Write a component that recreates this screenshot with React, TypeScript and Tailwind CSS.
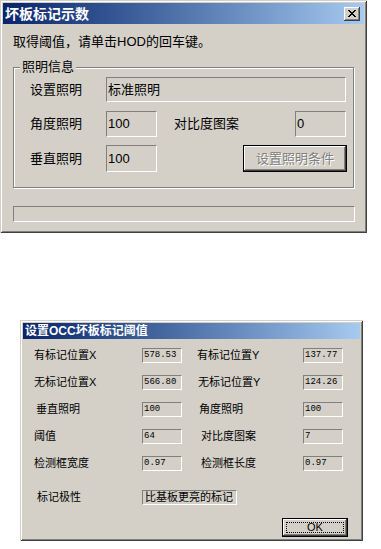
import React from "react";

const win =
  "bg-[#d4d0c8] shadow-[inset_1px_1px_#d4d0c8,inset_-1px_-1px_#404040,inset_2px_2px_#ffffff,inset_-2px_-2px_#808080]";
const sunken = "border border-t-[#808080] border-l-[#808080] border-b-white border-r-white";
const raised =
  "bg-[#d4d0c8] shadow-[inset_-1px_-1px_#404040,inset_1px_1px_#ffffff,inset_-2px_-2px_#808080]";

function CloseBtn() {
  return (
    <div className={`w-[16px] h-[14px] flex items-center justify-center ${raised}`}>
      <svg width="8" height="7" viewBox="0 0 8 7" shapeRendering="crispEdges">
        <path d="M0 0h2v1h-2zM6 0h2v1h-2zM1 1h2v1h-2zM5 1h2v1h-2zM2 2h4v1h-4zM3 3h2v1h-2zM2 4h4v1h-4zM1 5h2v1h-2zM5 5h2v1h-2zM0 6h2v1h-2zM6 6h2v1h-2z" fill="#000" />
      </svg>
    </div>
  );
}

function Row({
  l1,
  v1,
  l2,
  v2,
  o1 = 0,
  o2 = 0,
}: {
  l1: string;
  v1: string;
  l2: string;
  v2: string;
  o1?: number;
  o2?: number;
}) {
  return (
    <div className="flex items-center h-[15px]">
      <div className={`w-[119px] text-[11px] leading-[15px] whitespace-nowrap ${o1 === 2 ? "pl-[13px]" : o1 === 3 ? "pl-[14px]" : "pl-[11px]"}`}>{l1}</div>
      <div className={`w-[40px] h-[15px] ${sunken} flex items-center pl-[1px] font-['Liberation_Mono',monospace] text-[9px] leading-none`}>{v1}</div>
      <div
        className={`w-[121px] text-[11px] leading-[15px] whitespace-nowrap ${o2 === 1 ? "pl-[16px]" : o2 === 2 ? "pl-[17px]" : o2 === 4 ? "pl-[19px]" : "pl-[15px]"}`}
      >
        {l2}
      </div>
      <div className={`w-[40px] h-[15px] ${sunken} flex items-center pl-[1px] font-['Liberation_Mono',monospace] text-[9px] leading-none`}>{v2}</div>
    </div>
  );
}

export default function App() {
  return (
    <div className="w-[381px] h-[549px] bg-white text-black font-['Liberation_Sans','Noto_Sans_CJK_SC',sans-serif]">
      {/* Top dialog */}
      <div className={`w-[367px] h-[233px] p-[3px] flex flex-col ${win}`}>
        <div className="h-[21px] flex items-center justify-between bg-linear-to-r from-[#0a246a] to-[#a6caf0] pl-[2px] pr-[4px]">
          <span className="text-white font-bold text-[14px] leading-none">坏板标记示数</span>
          <CloseBtn />
        </div>
        <div className="mt-[10px] pl-[10px] text-[13px] leading-[16px]">取得阈值，请单击HOD的回车键。</div>
        <div className="relative mt-[17px] ml-[10px] w-[341px] h-[121px] border border-[#808080] shadow-[inset_1px_1px_#ffffff,1px_1px_#ffffff] flex flex-col pt-[9px]">
          <span className="absolute left-[6px] top-[-9px] px-[2px] bg-[#d4d0c8] text-[13px] leading-[16px]">照明信息</span>
          <div className="flex items-center h-[25px]">
            <div className="w-[92px] pl-[16px] text-[13px]">设置照明</div>
            <div className={`w-[240px] h-[25px] ${sunken} flex items-center pl-[1px] text-[13px]`}>标准照明</div>
          </div>
          <div className="flex items-center h-[26px] mt-[9px]">
            <div className="w-[92px] pl-[16px] text-[13px]">角度照明</div>
            <div className={`w-[51px] h-[26px] ${sunken} flex items-center pl-[1px] text-[13px]`}>100</div>
            <div className="w-[138px] pl-[17px] text-[13px]">对比度图案</div>
            <div className={`w-[51px] h-[26px] ${sunken} flex items-center pl-[1px] text-[13px]`}>0</div>
          </div>
          <div className="flex items-center h-[27px] mt-[8px]">
            <div className="w-[92px] pl-[16px] text-[13px]">垂直照明</div>
            <div className={`w-[51px] h-[27px] ${sunken} flex items-center pl-[1px] text-[13px]`}>100</div>
            <div className="w-[86px]" />
            <div className="w-[104px] h-[27px] border border-black">
              <div className={`w-full h-full flex items-center justify-center text-[13px] text-[#808080] [text-shadow:1px_1px_#ffffff] ${raised}`}>
                设置照明条件
              </div>
            </div>
          </div>
        </div>
        <div className={`mt-[18px] ml-[10px] w-[342px] h-[16px] ${sunken}`} />
      </div>

      {/* Bottom dialog */}
      <div className={`mt-[87px] ml-[20px] w-[343px] h-[221px] p-[3px] flex flex-col ${win}`}>
        <div className="h-[16px] flex items-center bg-linear-to-r from-[#0a246a] to-[#a6caf0] pl-[2px]">
          <span className="text-white font-bold text-[12px] leading-none">设置OCC坏板标记阈值</span>
        </div>
        <div className="mt-[9px] flex flex-col gap-[12px]">
          <Row l1="有标记位置X" v1="578.53" l2="有标记位置Y" v2="137.77" />
          <Row l1="无标记位置X" v1="566.80" l2="无标记位置Y" v2="124.26" o2={1} />
          <Row l1="垂直照明" v1="100" l2="角度照明" v2="100" o1={2} o2={2} />
          <Row l1="阈值" v1="64" l2="对比度图案" v2="7" o2={4} />
          <Row l1="检测框宽度" v1="0.97" l2="检测框长度" v2="0.97" o2={4} />
        </div>
        <div className="mt-[19px] flex items-center h-[15px]">
          <div className="w-[119px] pl-[14px] text-[11px] leading-[15px] whitespace-nowrap">标记极性</div>
          <div className={`w-[95px] h-[15px] ${sunken} flex items-center pl-[2px] text-[11px] leading-none whitespace-nowrap overflow-hidden`}>比基板更亮的标记</div>
        </div>
        <div className="mt-[13px] flex">
          <div className="ml-[259px] w-[66px] h-[19px] border border-black">
            <div className={`w-full h-full p-[3px] ${raised}`}>
              <div className="w-full h-full border border-dotted border-black flex items-center justify-center text-[11px] leading-none">
                OK
              </div>
            </div>
          </div>
        </div>
      </div>
    </div>
  );
}
